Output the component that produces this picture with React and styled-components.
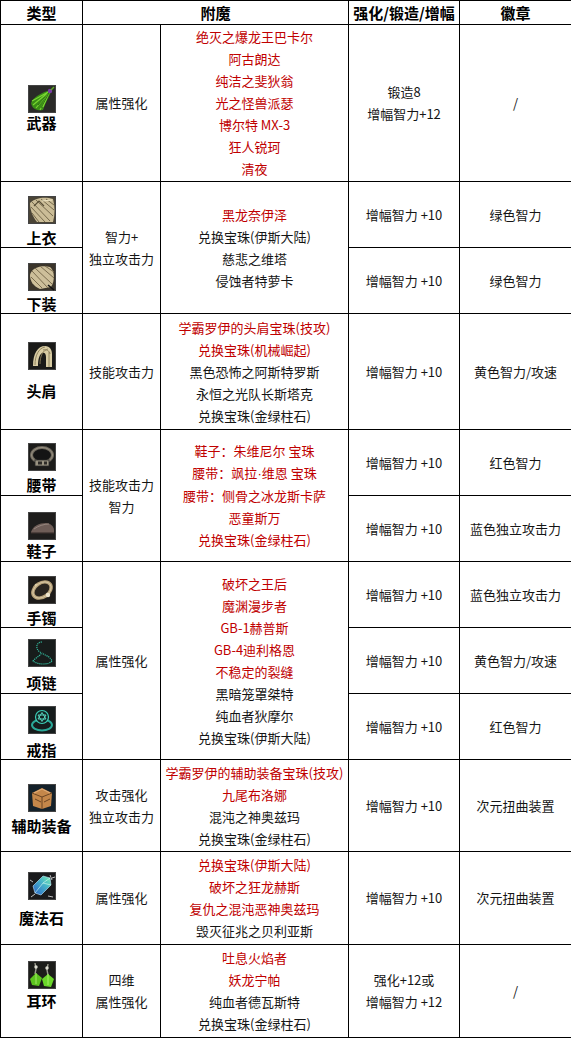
import React from 'react';
import styled, { createGlobalStyle } from 'styled-components';

const Global = createGlobalStyle`
  html, body { margin: 0; padding: 0; background: #fff; }
  body { font-family: "Noto Sans CJK SC", "Noto Sans", sans-serif; }
`;

const Table = styled.table`
  border-collapse: collapse;
  table-layout: fixed;
  width: 571px;
  font-family: "Noto Sans CJK SC", "Noto Sans", sans-serif;
  font-size: 13px;
  color: #151515;
`;

const Col = styled.col`
  width: ${(p) => p.$w}px;
`;

const Row = styled.tr`
  height: ${(p) => p.$h}px;
`;

const Th = styled.th`
  border: 1px solid #000;
  padding: 0;
  font-size: 15px;
  font-weight: 700;
  line-height: 20px;
  text-align: center;
  vertical-align: middle;
  color: #000;
`;

const Td = styled.td`
  border: 1px solid #000;
  padding: 0;
  text-align: center;
  vertical-align: middle;
  line-height: 22px;
  white-space: nowrap;
  overflow: hidden;
`;

const TypeCell = styled(Td)`
  vertical-align: top;
  padding-top: ${(p) => p.$pt}px;
`;

const IconBox = styled.div`
  width: 28px;
  height: 28px;
  margin: 0 auto;
  svg { display: block; }
`;

const TypeLabel = styled.div`
  margin-top: ${(p) => p.$gap}px;
  font-size: 15px;
  font-weight: 700;
  line-height: 16px;
  color: #000;
`;

const Line = styled.div`
  color: ${(p) => (p.$red ? '#c00000' : '#151515')};
`;

const Dot = styled.span`
  font-family: "Liberation Sans", sans-serif;
`;

const Frame = ({ bg = '#1b1b1b', children }) => (
  <svg width="28" height="28" viewBox="0 0 28 28">
    <rect x="0.5" y="0.5" width="27" height="27" fill={bg} stroke="#444" />
    {children}
  </svg>
);

const icons = {
  weapon: (
    <Frame bg="#2a2a28">
      <path d="M22 5 C15 7 5 12 3 18 C4 24 9 26 15 25 C17 18 21 12 23 7 Z" fill="#3a8c16" />
      <path d="M22 6 L5 20 M22 6 L8 23 M22 6 L12 25 M22 6 L4 16 M22 6 L15 22" stroke="#7ad832" strokeWidth="1.1" />
      <path d="M22 6 L10 20 M22 6 L13 23" stroke="#1e5a0c" strokeWidth="0.8" />
      <circle cx="22" cy="6" r="2.2" fill="#7b3aa8" />
      <path d="M23 5 L26 2" stroke="#5da824" strokeWidth="1.5" />
    </Frame>
  ),
  top: (
    <Frame bg="#4a4436">
      <path d="M2 7 C8 1 18 1 25 3 C27 10 27 19 25 26 L9 26 C4 20 2 13 2 7 Z" fill="#cbbd97" />
      <path d="M4 6 L22 25 M8 4 L25 20 M13 3 L26 14 M3 11 L17 26 M4 17 L11 26 M18 3 L26 9" stroke="#766a4c" strokeWidth="1" />
      <path d="M6 10 L11 5 L16 10" stroke="#5a5038" strokeWidth="1.2" fill="none" />
      <path d="M14 5 L24 4" stroke="#ece2c2" strokeWidth="1.2" />
    </Frame>
  ),
  bottom: (
    <Frame bg="#3a342a">
      <path d="M2 12 C4 4 14 2 22 4 C27 8 27 18 23 24 L12 26 C5 23 2 18 2 12 Z" fill="#cdbf9a" />
      <path d="M4 8 L20 25 M7 5 L24 21 M12 3 L26 15 M3 14 L14 25 M17 3 L26 9" stroke="#7a6c4e" strokeWidth="1" />
      <path d="M20 22 L26 27" stroke="#111" strokeWidth="1.6" />
    </Frame>
  ),
  shoulder: (
    <Frame bg="#1a1a18">
      <path d="M5 24 C5 11 10 4 17 4 C22 4 24 8 24 12 L24 25 L18 25 L18 15 C18 11 16 10 14 11 C11 13 10 18 10 24 Z" fill="#d8cca3" />
      <path d="M7 23 C7 13 11 6 17 5 M12 22 C12 14 15 8 20 7 M21 10 L21 25 M15 8 C18 7 22 9 22 12" stroke="#8a7d58" strokeWidth="0.9" fill="none" />
    </Frame>
  ),
  belt: (
    <Frame bg="#1c1c1a">
      <ellipse cx="14" cy="12" rx="10.5" ry="7.5" fill="#141414" stroke="#6d675c" strokeWidth="3" />
      <ellipse cx="14" cy="12" rx="10.5" ry="7.5" fill="none" stroke="#a39c8a" strokeWidth="0.8" />
      <rect x="7" y="17" width="14" height="6" fill="#9a9482" stroke="#2a2a28" strokeWidth="0.8" />
      <rect x="10" y="18.5" width="4" height="3" fill="#2d2b27" />
      <rect x="16" y="18.5" width="3" height="3" fill="#2d2b27" />
    </Frame>
  ),
  shoes: (
    <Frame bg="#1e1d1c">
      <path d="M3 20 C5 14 11 11 18 11 C23 11 26 15 26 18 L26 21 L3 21 Z" fill="#6e5d57" />
      <path d="M6 17 C10 14 16 12 21 12" stroke="#9a8a82" strokeWidth="0.9" fill="none" />
      <path d="M3 21 L26 21" stroke="#3a302c" strokeWidth="1.2" />
    </Frame>
  ),
  bracelet: (
    <Frame bg="#1d1b19">
      <ellipse cx="14" cy="14" rx="10" ry="7" transform="rotate(-35 14 14)" fill="#2a2520" stroke="#b8a27a" strokeWidth="3.4" />
      <ellipse cx="14" cy="14" rx="10" ry="7" transform="rotate(-35 14 14)" fill="none" stroke="#e2d4b2" strokeWidth="0.7" />
      <circle cx="20" cy="19" r="2.2" fill="#efe6cf" />
      <circle cx="8" cy="9" r="1.3" fill="#d8c8a2" />
    </Frame>
  ),
  necklace: (
    <Frame bg="#171c1b">
      <path d="M14 3 C8 3 7 10 12 13 C16 15 8 18 5 22 C10 26 21 26 24 22 C22 17 16 16 14 14" fill="none" stroke="#33b89c" strokeWidth="1.2" strokeDasharray="1.2 0.8" />
    </Frame>
  ),
  ring: (
    <Frame bg="#161c1c">
      <ellipse cx="14" cy="19" rx="10" ry="5.5" fill="none" stroke="#2aa898" strokeWidth="2" />
      <circle cx="14" cy="11" r="6.5" fill="#122322" stroke="#3ccfb8" strokeWidth="1.2" />
      <path d="M14 6.5 L18 13 L10 13 Z M14 15.5 L10 9 L18 9 Z" fill="none" stroke="#5ee0c8" strokeWidth="0.9" />
    </Frame>
  ),
  support: (
    <Frame bg="#14212a">
      <path d="M4 9 L14 4 L24 9 L23 22 L14 25 L5 22 Z" fill="#c4874a" />
      <path d="M4 9 L14 13 L24 9 M14 13 L14 25 M7 15 L13 18 M16 18 L22 15" stroke="#6a4422" strokeWidth="1" fill="none" />
      <path d="M6 9 L14 5 L22 9" stroke="#e6b07a" strokeWidth="1" fill="none" />
    </Frame>
  ),
  magic: (
    <Frame bg="#1a1a1c">
      <defs>
        <linearGradient id="gem" x1="0" y1="1" x2="1" y2="0">
          <stop offset="0" stopColor="#2a5fc8" />
          <stop offset="0.6" stopColor="#47b6c8" />
          <stop offset="1" stopColor="#7ff0b0" />
        </linearGradient>
      </defs>
      <path d="M7 21 L5 14 L15 4 L22 6 L23 13 L13 23 Z" fill="url(#gem)" stroke="#bfe8ff" strokeWidth="0.6" />
      <path d="M7 21 L15 11 L22 6 M15 11 L23 13" stroke="#d9fff0" strokeWidth="0.6" fill="none" />
      <path d="M22 3 L24 8 M24 6 L27 5 M2 8 L5 10 M20 24 L25 25 M3 25 L7 22" stroke="#e8e8e8" strokeWidth="0.8" />
    </Frame>
  ),
  earring: (
    <Frame bg="#1c1d1a">
      <path d="M7 2 L8 8 L7 13 M20 3 L19 9 L20 14" stroke="#9a9a8e" strokeWidth="1.4" fill="none" />
      <circle cx="8" cy="6" r="1.7" fill="#dcdcd0" />
      <circle cx="19" cy="7" r="1.7" fill="#dcdcd0" />
      <path d="M2 18 L8 12 L14 17 L11 25 L4 24 Z" fill="#5cc41e" />
      <path d="M14 18 L20 13 L26 18 L23 26 L16 25 Z" fill="#6ad62a" />
      <path d="M8 12 L8 23 M20 13 L20 24" stroke="#b6f57a" strokeWidth="0.8" />
    </Frame>
  ),
};

const R = (t) => ({ t, red: true });
const B = (t) => ({ t, red: false });

const renderText = (t) => {
  if (!t.includes('·')) return t;
  const parts = t.split('·');
  return parts.map((p, i) => (
    <React.Fragment key={i}>
      {p}
      {i < parts.length - 1 && <Dot>·</Dot>}
    </React.Fragment>
  ));
};

const groups = [
  {
    attr: ['属性强化'],
    enchants: ['绝灭之爆龙王巴卡尔', '阿古朗达', '纯洁之斐狄翁', '光之怪兽派瑟', '博尔特 MX-3', '狂人锐珂', '清夜'].map(R),
    items: [
      { icon: 'weapon', label: '武器', h: 157, pt: 60, gap: 2, boost: ['锻造8', '增幅智力+12'], badge: '/' },
    ],
  },
  {
    attr: ['智力+', '独立攻击力'],
    enchants: [R('黑龙奈伊泽'), B('兑换宝珠(伊斯大陆)'), B('慈悲之维塔'), B('侵蚀者特萝卡')],
    items: [
      { icon: 'top', label: '上衣', h: 66, pt: 14, gap: 6, boost: ['增幅智力 +10'], badge: '绿色智力' },
      { icon: 'bottom', label: '下装', h: 66, pt: 15, gap: 5, boost: ['增幅智力 +10'], badge: '绿色智力' },
    ],
  },
  {
    attr: ['技能攻击力'],
    enchants: [R('学霸罗伊的头肩宝珠(技攻)'), R('兑换宝珠(机械崛起)'), B('黑色恐怖之阿斯特罗斯'), B('永恒之光队长斯塔克'), B('兑换宝珠(金绿柱石)')],
    items: [
      { icon: 'shoulder', label: '头肩', h: 116, pt: 28, gap: 13, boost: ['增幅智力 +10'], badge: '黄色智力/攻速' },
    ],
  },
  {
    attr: ['技能攻击力', '智力'],
    enchants: ['鞋子：朱维尼尔 宝珠', '腰带：飒拉·维恩 宝珠', '腰带：侧骨之冰龙斯卡萨', '恶童斯万', '兑换宝珠(金绿柱石)'].map(R),
    items: [
      { icon: 'belt', label: '腰带', h: 66, pt: 13, gap: 6, boost: ['增幅智力 +10'], badge: '红色智力' },
      { icon: 'shoes', label: '鞋子', h: 66, pt: 16, gap: 3, boost: ['增幅智力 +10'], badge: '蓝色独立攻击力' },
    ],
  },
  {
    attr: ['属性强化'],
    enchants: [
      R('破坏之王后'), R('魔渊漫步者'), R('GB-1赫普斯'), R('GB-4迪利格恩'), R('不稳定的裂缝'),
      B('黑暗笼罩桀特'), B('纯血者狄摩尔'), B('兑换宝珠(伊斯大陆)'),
    ],
    items: [
      { icon: 'bracelet', label: '手镯', h: 66, pt: 14, gap: 6, boost: ['增幅智力 +10'], badge: '蓝色独立攻击力' },
      { icon: 'necklace', label: '项链', h: 66, pt: 11, gap: 8, boost: ['增幅智力 +10'], badge: '黄色智力/攻速' },
      { icon: 'ring', label: '戒指', h: 66, pt: 12, gap: 8, boost: ['增幅智力 +10'], badge: '红色智力' },
    ],
  },
  {
    attr: ['攻击强化', '独立攻击力'],
    enchants: [R('学霸罗伊的辅助装备宝珠(技攻)'), R('九尾布洛娜'), B('混沌之神奥兹玛'), B('兑换宝珠(金绿柱石)')],
    items: [
      { icon: 'support', label: '辅助装备', h: 92, pt: 24, gap: 6, boost: ['增幅智力 +10'], badge: '次元扭曲装置' },
    ],
  },
  {
    attr: ['属性强化'],
    enchants: [R('兑换宝珠(伊斯大陆)'), R('破坏之狂龙赫斯'), R('复仇之混沌恶神奥兹玛'), B('毁灭征兆之贝利亚斯')],
    items: [
      { icon: 'magic', label: '魔法石', h: 93, pt: 20, gap: 10, boost: ['增幅智力 +10'], badge: '次元扭曲装置' },
    ],
  },
  {
    attr: ['四维', '属性强化'],
    enchants: [R('吐息火焰者'), R('妖龙宁帕'), B('纯血者德瓦斯特'), B('兑换宝珠(金绿柱石)')],
    items: [
      { icon: 'earring', label: '耳环', h: 93, pt: 16, gap: 4, boost: ['强化+12或', '增幅智力 +12'], badge: '/' },
    ],
  },
];

export default function App() {
  return (
    <>
      <Global />
      <Table>
        <colgroup>
          <Col $w={82} />
          <Col $w={78} />
          <Col $w={188} />
          <Col $w={111} />
          <Col $w={112} />
        </colgroup>
        <thead>
          <Row $h={24}>
            <Th>类型</Th>
            <Th colSpan={2}>附魔</Th>
            <Th>强化/锻造/增幅</Th>
            <Th>徽章</Th>
          </Row>
        </thead>
        <tbody>
          {groups.map((g, gi) =>
            g.items.map((it, i) => (
              <Row key={`${gi}-${i}`} $h={it.h}>
                <TypeCell $pt={it.pt}>
                  <IconBox>{icons[it.icon]}</IconBox>
                  <TypeLabel $gap={it.gap}>{it.label}</TypeLabel>
                </TypeCell>
                {i === 0 && (
                  <Td rowSpan={g.items.length}>
                    {g.attr.map((a) => (
                      <Line key={a}>{a}</Line>
                    ))}
                  </Td>
                )}
                {i === 0 && (
                  <Td rowSpan={g.items.length}>
                    {g.enchants.map((e, ei) => (
                      <Line key={ei} $red={e.red}>{renderText(e.t)}</Line>
                    ))}
                  </Td>
                )}
                <Td>
                  {it.boost.map((b) => (
                    <Line key={b}>{b}</Line>
                  ))}
                </Td>
                <Td>
                  <Line>{it.badge}</Line>
                </Td>
              </Row>
            ))
          )}
        </tbody>
      </Table>
    </>
  );
}
